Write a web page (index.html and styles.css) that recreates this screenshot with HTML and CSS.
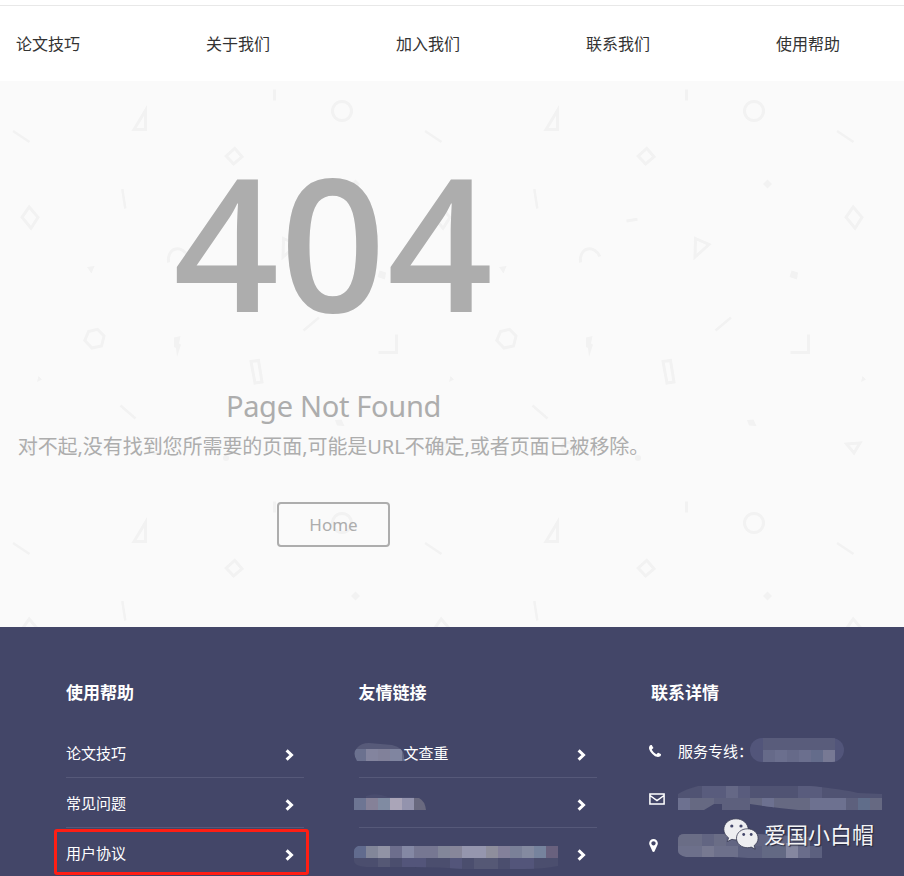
FILE: index.html
```html
<!DOCTYPE html>
<html lang="zh-CN">
<head>
<meta charset="utf-8">
<title>404 Page Not Found</title>
<link rel="stylesheet" href="styles.css">
</head>
<body>
<svg class="defs" aria-hidden="true">
  <symbol id="chevron" viewBox="0 0 9 12"><path d="M1.600 1.300 6.500 6 1.600 10.700" fill="none" stroke="#fff" stroke-width="3"/></symbol>
</svg>
<nav class="nav">
  <a>论文技巧</a><a>关于我们</a><a>加入我们</a><a>联系我们</a><a>使用帮助</a>
</nav>
<main class="hero">
  <svg class="hero-pattern" width="904" height="546" aria-hidden="true">
    <defs>
      <pattern id="confetti" width="412" height="412" patternUnits="userSpaceOnUse">
        <g transform="translate(0 -81)" fill="none" stroke="#f2f2f2" stroke-width="3">
          <path d="M134 129.500H145.500V110.500Z"/>
          <path d="M13 131 29.500 142" stroke-width="2.500"/>
          <path d="M274.500 89.500V100.500"/>
          <circle cx="342" cy="111" r="9.500"/>
          <path d="M234.700 148.300 242 156.800 233.600 164 226.200 156Z"/>
          <path d="M122.300 189 125.300 208.500" stroke-width="2.500"/>
          <path d="M29.200 207 38 217.300 31 228.300 22 217.300Z"/>
          <path d="M87 267 94.500 266 91.500 273.500Z" fill="#f2f2f2" stroke="none"/>
          <path d="M168.500 262.500C167 246 183 245 187.800 256.500"/>
          <path d="M283.500 238.500 297 244.500 283 257Z"/>
          <path d="M214.500 221 225.500 219.300"/>
          <path d="M355.500 179.500 360 184 355.500 188.500 351 184Z" fill="#f2f2f2" stroke="none"/>
          <path d="M379.500 270.500 386 272.500 385 279.500 377.500 277Z" fill="#f2f2f2" stroke="none"/>
          <path d="M303.500 330.500 319 317.500" stroke-width="2.500"/>
          <path d="M378.500 352.500H396.500V334.500"/>
          <path d="M88.500 331.500 97.500 329.300 104 336 101.500 346 92 348 84.800 340.500Z"/>
          <path d="M174 337.500 180.500 336 179 343.500 181 344.500 177 357 176 348 174 347Z" fill="#f2f2f2" stroke="none"/>
          <path d="M251 361.500 258.500 360.500 262 382 255 383Z"/>
          <path d="M38.500 376 42 379.500 37 382Z" fill="#f2f2f2" stroke="none"/>
          <path d="M120.500 405.500 135.500 418.500" stroke-width="2.500"/>
          <path d="M335 420 341.500 419.500 344.500 426 337 425.500Z" fill="#f2f2f2" stroke="none"/>
          <path d="M22.500 444 36 443 30 453Z"/>
          <circle cx="155.500" cy="448" r="5.500"/>
          <circle cx="226" cy="458" r="3" fill="#f2f2f2" stroke="none"/>
        </g>
      </pattern>
    </defs>
    <rect width="904" height="546" fill="url(#confetti)"/>
  </svg>
  <div class="hero-body">
    <h1>404</h1>
    <h2>Page Not Found</h2>
    <p>对不起,没有找到您所需要的页面,可能是URL不确定,或者页面已被移除。</p>
    <a class="home">Home</a>
  </div>
</main>
<footer class="footer">
  <section>
    <h3>使用帮助</h3>
    <ul class="links">
      <li><span>论文技巧</span><svg class="chev"><use href="#chevron"/></svg></li>
      <li><span>常见问题</span><svg class="chev"><use href="#chevron"/></svg></li>
      <li class="marked"><span>用户协议</span><svg class="chev"><use href="#chevron"/></svg></li>
    </ul>
  </section>
  <section>
    <h3>友情链接</h3>
    <ul class="links">
      <li>
        <svg class="mosaic" width="50" height="24" viewBox="0 0 50 24">
          <clipPath id="m1"><path d="M3 22Q-2 14 3 9 7 4 15 4L38 6Q50 9 50 17V22Z"/></clipPath>
          <g clip-path="url(#m1)"><path fill="#575a79" d="M0 3h50v7H0z"/><path fill="#6b718f" d="M0 10h12v12H0z"/><path fill="#83849e" d="M12 10h12v12H12z"/><path fill="#81819a" d="M24 10h12v12H24z"/><path fill="#8085a0" d="M36 10h12v12H36z"/><path fill="#656983" d="M48 10h2v12h-2z"/></g>
        </svg>
        <span>文查重</span><svg class="chev"><use href="#chevron"/></svg>
      </li>
      <li>
        <svg class="mosaic" width="72" height="24" viewBox="0 0 72 24">
          <path fill="#494c6e" d="M12 9V7Q22 3 34 8H60V9Z"/>
          <path fill="#6d7593" d="M0 9h12v12H0z"/><path fill="#858198" d="M12 9h12v12H12z"/><path fill="#808ba2" d="M24 9h12v12H24z"/><path fill="#aaa5b8" d="M36 9h12v12H36z"/><path fill="#9393ad" d="M48 9h12v12H48z"/><path fill="#69697f" d="M60 9h5q6 3 7 12H60z"/>
        </svg>
        <svg class="chev"><use href="#chevron"/></svg>
      </li>
      <li>
        <svg class="mosaic" width="204" height="30" viewBox="0 0 204 30">
          <clipPath id="m3"><path d="M4 5H204V25Q190 28 170 28H110Q85 26 60 26H12Q0 25 0 20V10Q0 7 4 5Z"/></clipPath>
          <g clip-path="url(#m3)">
            <path fill="#4b4e6e" d="M0 17h204v12H0z"/>
            <path fill="#53557a" d="M48 17h24v12H48zM96 17h12v12H96zM156 17h24v12h-24z"/><path fill="#555875" d="M24 17h12v12H24zM120 17h24v12h-24z"/>
            <path fill="#616b8e" d="M0 5h12v12H0z"/><path fill="#828699" d="M12 5h12v12H12zM84 5h12v12H84z"/><path fill="#9193a5" d="M24 5h12v12H24z"/><path fill="#6d6e8d" d="M36 5h12v12H36z"/><path fill="#8488a4" d="M48 5h12v12H48z"/><path fill="#767792" d="M60 5h24v12H60z"/><path fill="#87869a" d="M96 5h12v12H96z"/><path fill="#9596ae" d="M108 5h24v12h-24z"/><path fill="#8e8e9c" d="M132 5h12v12h-12z"/><path fill="#83809a" d="M144 5h12v12h-12z"/><path fill="#7a8098" d="M156 5h12v12h-12z"/><path fill="#848aa0" d="M168 5h12v12h-12z"/><path fill="#76839d" d="M180 5h12v12h-12z"/><path fill="#69617e" d="M192 5h12v12h-12z"/>
          </g>
        </svg>
        <svg class="chev"><use href="#chevron"/></svg>
      </li>
    </ul>
  </section>
  <section class="contact-col">
    <h3>联系详情</h3>
    <ul class="contact">
      <li>
        <svg class="icon phone" viewBox="0 256 1408 1408"><path fill="#fff" d="M1408 1368q0 27-10 70.500t-21 68.500q-21 50-122 106-94 51-186 51-27 0-53-3.500t-57.500-12.500-47-14.500-55.500-20.500-49-18q-98-35-175-83-127-79-264-216t-216-264q-48-77-83-175-3-9-18-49t-20.500-55.500-14.500-47-12.500-57.500-3.500-53q0-92 51-186 56-101 106-122 25-11 68.500-21t70.500-10q14 0 21 3 18 6 53 76 11 19 30 54t35 63.500 31 53.500q3 4 17.500 25t21.500 35.500 7 28.500q0 20-28.500 50t-62 55-62 53-28.500 46q0 9 5 22.500t8.500 20.500 14 24 11.500 19q76 137 174 235t235 174q2 1 19 11.500t24 14 20.500 8.500 22.500 5q18 0 46-28.500t53-62 55-62 50-28.500q14 0 28.500 7t35.500 21.500 25 17.500q25 15 53.500 31t63.500 35 54 30q70 35 76 53 3 7 3 21z"/></svg>
        <span>服务专线：</span>
        <svg class="phone-mosaic" width="94" height="24" viewBox="0 0 94 24">
          <clipPath id="c1"><rect width="94" height="24" rx="12"/></clipPath>
          <g clip-path="url(#c1)"><path fill="#52557a" d="M0 0h94v24H0z"/><path fill="#595c7b" d="M13 0h72v12H13z"/><path fill="#666a89" d="M13 12h12v12H13zM37 12h12v12H37z"/><path fill="#6b6f8e" d="M25 12h12v12H25zM49 12h12v12H49z"/><path fill="#646c8b" d="M61 12h12v12H61z"/><path fill="#777994" d="M73 12h12v12H73z"/></g>
        </svg>
      </li>
      <li>
        <svg class="icon" viewBox="0 0 16 16"><path d="M.9 2.900H15.100V13.100H.9ZM1 4.500 8 9.600 15 4.500" fill="none" stroke="#fff" stroke-width="1.500"/></svg>
        <svg width="204" height="24" viewBox="0 0 204 24">
          <clipPath id="c2"><path d="M0 8Q8 3 20 0H132Q164 3 180 7L204 8V24H120Q98 22 72 18V24H44V18H36L26 24H0Z"/></clipPath>
          <g clip-path="url(#c2)"><path fill="#505373" d="M0 0h204v12H0z"/><path fill="#595c7d" d="M24 0h24v12H24zM60 0h12v12H60zM120 0h24v12h-24z"/><path fill="#656886" d="M48 0h12v12H48z"/><path fill="#666982" d="M0 12h204v12H0z"/><path fill="#6d7190" d="M0 12h12v12H0zM84 12h12v12H84zM132 12h36v12h-36z"/><path fill="#5d607d" d="M36 12h36v12H36zM168 12h12v12h-12z"/><path fill="#606d8a" d="M180 12h12v12h-12z"/></g>
        </svg>
      </li>
      <li>
        <svg class="icon pin" viewBox="0 0 1024 1536"><path fill="#fff" d="M768 512q0-106-75-181t-181-75-181 75-75 181 75 181 181 75 181-75 75-181zm256 0q0 109-33 179l-364 774q-16 33-47.500 52t-67.500 19-67.500-19-46.500-52l-365-774q-33-70-33-179 0-212 150-362t362-150 362 150 150 362z"/></svg>
        <svg width="144" height="24" viewBox="0 0 144 24">
          <clipPath id="c3"><path d="M6 0H80L132 3V12H144V24H70L55 23H8Q0 21 0 17V6Q0 0 6 0Z"/></clipPath>
          <g clip-path="url(#c3)"><path fill="#626582" d="M0 0h144v12H0z"/><path fill="#6a6d86" d="M0 0h24v12H0zM36 0h12v12H36z"/><path fill="#6d708b" d="M0 12h60v12H0z"/><path fill="#777991" d="M24 12h12v12H24z"/><path fill="#5c607f" d="M60 12h84v12H60z"/><path fill="#636984" d="M84 12h24v12H84z"/><path fill="#8587a0" d="M108 9h12v15h-12z"/><path fill="#6a6d8b" d="M120 12h12v12h-12z"/></g>
        </svg>
      </li>
    </ul>
  </section>
</footer>
<div class="watermark">
  <svg width="36" height="32" viewBox="0 0 36 32">
    <g fill="#eeeef1" stroke="#35374f" stroke-width=".8">
      <path d="M13 .8C6 .8.800 5.500.800 11.400c0 3.500 1.900 6.400 4.800 8.400L4.300 23.600l4.600-2.300c1.300.4 2.700.6 4.100.6 6.800 0 12.200-4.700 12.200-10.500S19.800.8 13 .8Z"/>
      <path d="M24.300 10.800c-6 0-10.800 4-10.800 9.400s4.800 9.500 10.800 9.500c1.400 0 2.700-.2 3.900-.6l4 2-1.100-3.500c2.400-1.700 4-4.300 4-7.400 0-5.300-4.800-9.400-10.800-9.400Z"/>
    </g>
    <g fill="#43466a"><circle cx="8.800" cy="8" r="1.600"/><circle cx="18" cy="8" r="1.600"/><circle cx="20.700" cy="16.500" r="1.400"/><circle cx="28.200" cy="16.500" r="1.400"/></g>
  </svg>
  <span>爱国小白帽</span>
</div>
</body>
</html>
```
FILE: styles.css
```css
*, *::after { box-sizing: border-box; }

body {
  margin: 0;
  height: 876px;
  overflow: hidden;
  position: relative;
  background: #fff;
  font-family: "Noto Sans", "Noto Sans CJK SC", sans-serif;
  color: #333;
}

h1, h2, h3, p, ul { margin: 0; padding: 0; }
ul { list-style: none; }
svg { display: block; flex: none; }
.defs { position: absolute; width: 0; height: 0; }

.nav {
  display: grid;
  grid-template-columns: repeat(4, 190px) 1fr;
  height: 76px;
  margin-top: 5px;
  padding-left: 16px;
  border-top: 1px solid #e8e8e8;
  font-family: "Noto Sans CJK SC", sans-serif;
  font-size: 16px;
  line-height: 75px;
}

.hero {
  position: relative;
  height: 546px;
  background: #fafafa;
  overflow: hidden;
}
.hero-pattern { position: absolute; inset: 0; }
.hero-body {
  position: relative;
  width: 667px;
  display: flex;
  flex-direction: column;
  align-items: center;
  color: #adadad;
}
.hero h1 {
  margin-top: 59px;
  height: 200px;
  font-family: "Open Sans", sans-serif;
  font-size: 185px;
  font-weight: 600;
  line-height: 200px;
  letter-spacing: 1px;
}
.hero h2 {
  margin-top: 46px;
  font-size: 29px;
  font-weight: 400;
  line-height: 40px;
  letter-spacing: -0.3px;
  white-space: nowrap;
}
.hero p {
  margin-top: 6px;
  font-size: 20px;
  line-height: 30px;
  letter-spacing: -0.06px;
  white-space: nowrap;
}
.home {
  width: 113px;
  height: 45px;
  margin-top: 40px;
  border: 2px solid #adadad;
  border-radius: 4px;
  font-size: 17px;
  line-height: 41px;
  text-align: center;
}

.footer {
  display: grid;
  grid-template-columns: 238px 238px 1fr;
  column-gap: 54.5px;
  height: 249px;
  padding: 50px 0 0 66px;
  background: #434668;
  color: #fff;
  font-family: "Noto Sans CJK SC", sans-serif;
  font-size: 15px;
}
.footer h3 {
  height: 30px;
  font-size: 17px;
  line-height: 30px;
}
.links { margin-top: 21px; }
.links li {
  position: relative;
  display: flex;
  height: 50px;
  border-bottom: 1px solid #565979;
  line-height: 49px;
}
.chev {
  width: 9px;
  height: 12px;
  margin: 21px 10.5px 0 auto;
}
.mosaic { margin: 11px 0 0 -5px; }
.links li:nth-child(3) .mosaic { margin-top: 13px; }
.marked::after {
  content: "";
  position: absolute;
  left: -12px;
  top: 1px;
  width: 255px;
  height: 46px;
  border: 3px solid #ff1e14;
  border-radius: 3px;
}

.contact { margin-top: 31px; }
.contact li {
  display: flex;
  height: 24px;
  margin-bottom: 24px;
  line-height: 26px;
}
.contact .icon {
  width: 16px;
  height: 16px;
  margin: 5px 13px 0 -2px;
}
.contact .phone {
  width: 12px;
  height: 12px;
  margin: 7px 17px 0 -2px;
}
.contact .pin {
  width: 9px;
  height: 13px;
  margin: 5px 20px 0 -2px;
}
.contact span { width: 72px; white-space: nowrap; }
.contact-col { min-width: 0; }

.watermark {
  position: absolute;
  left: 723px;
  top: 818px;
  display: flex;
  gap: 5px;
  color: #f4f4f6;
  font-family: "Noto Sans CJK SC", sans-serif;
  font-size: 22px;
  line-height: 31px;
  text-shadow: 1px 1px 1px #25273b;
}
```
